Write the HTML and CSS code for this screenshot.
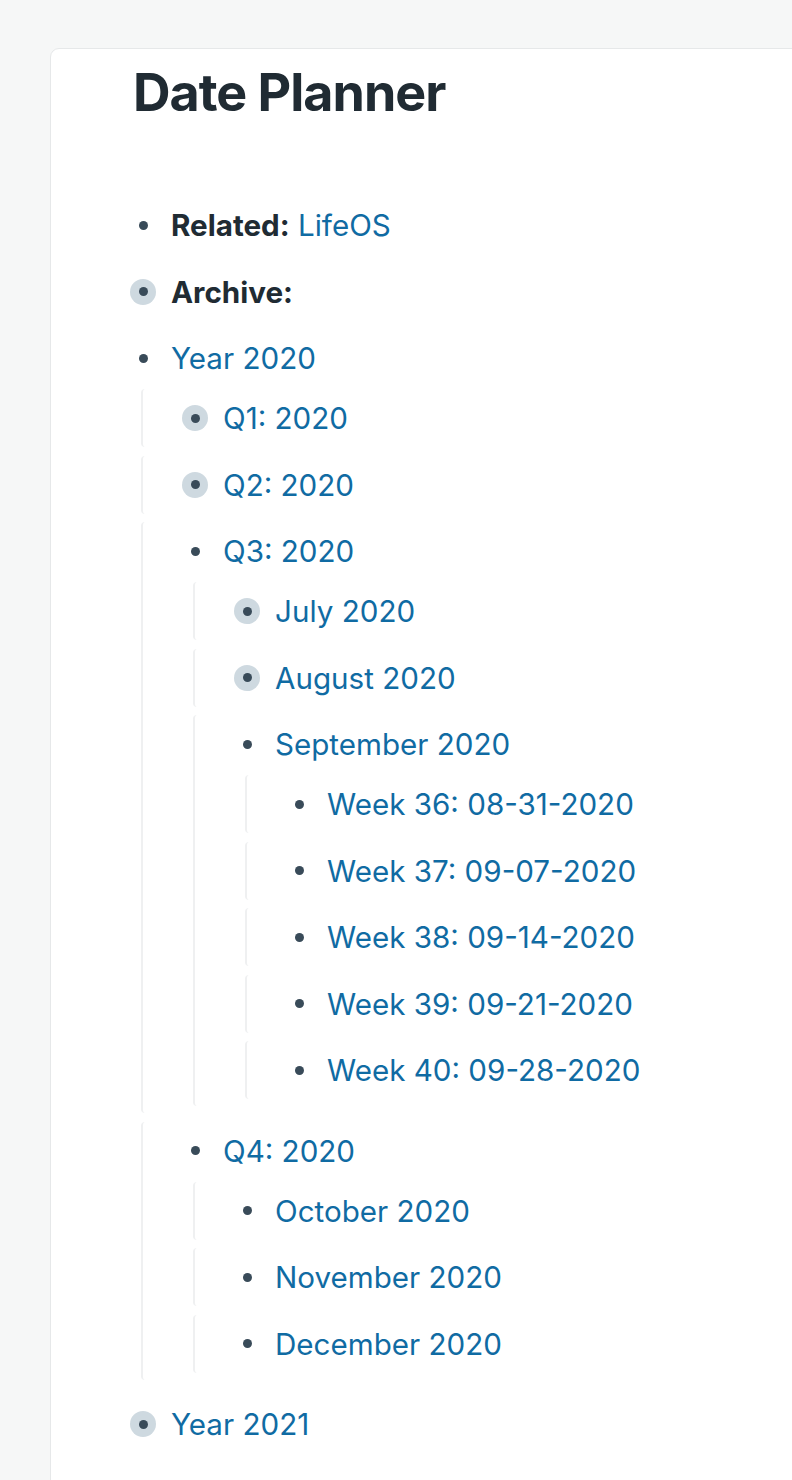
FILE: index.html
```html
<!DOCTYPE html>
<html>
<head>
<meta charset="utf-8">
<link rel="stylesheet" href="styles.css">
</head>
<body>
<div class="page">
  <div class="card">
    <h1 class="title">Date Planner</h1>
    <div class="tree">
      <div class="block">
        <div class="row"><span class="bullet"><span class="dot"></span></span><span class="text"><b class="label">Related:</b> <a class="ref">LifeOS</a></span></div>
      </div>
      <div class="block">
        <div class="row"><span class="bullet collapsed"><span class="dot"></span></span><span class="text"><b class="label">Archive:</b></span></div>
      </div>
      <div class="block parent">
        <div class="row"><span class="bullet"><span class="dot"></span></span><span class="text"><a class="ref">Year 2020</a></span></div>
        <div class="children">
          <div class="block">
            <div class="row"><span class="bullet collapsed"><span class="dot"></span></span><span class="text"><a class="ref">Q1: 2020</a></span></div>
          </div>
          <div class="block">
            <div class="row"><span class="bullet collapsed"><span class="dot"></span></span><span class="text"><a class="ref">Q2: 2020</a></span></div>
          </div>
          <div class="block parent">
            <div class="row"><span class="bullet"><span class="dot"></span></span><span class="text"><a class="ref">Q3: 2020</a></span></div>
            <div class="children">
              <div class="block">
                <div class="row"><span class="bullet collapsed"><span class="dot"></span></span><span class="text"><a class="ref">July 2020</a></span></div>
              </div>
              <div class="block">
                <div class="row"><span class="bullet collapsed"><span class="dot"></span></span><span class="text"><a class="ref">August 2020</a></span></div>
              </div>
              <div class="block parent">
                <div class="row"><span class="bullet"><span class="dot"></span></span><span class="text"><a class="ref">September 2020</a></span></div>
                <div class="children">
                  <div class="block">
                    <div class="row"><span class="bullet"><span class="dot"></span></span><span class="text"><a class="ref">Week 36: 08-31-2020</a></span></div>
                  </div>
                  <div class="block">
                    <div class="row"><span class="bullet"><span class="dot"></span></span><span class="text"><a class="ref">Week 37: 09-07-2020</a></span></div>
                  </div>
                  <div class="block">
                    <div class="row"><span class="bullet"><span class="dot"></span></span><span class="text"><a class="ref">Week 38: 09-14-2020</a></span></div>
                  </div>
                  <div class="block">
                    <div class="row"><span class="bullet"><span class="dot"></span></span><span class="text"><a class="ref">Week 39: 09-21-2020</a></span></div>
                  </div>
                  <div class="block">
                    <div class="row"><span class="bullet"><span class="dot"></span></span><span class="text"><a class="ref">Week 40: 09-28-2020</a></span></div>
                  </div>
                </div>
              </div>
            </div>
          </div>
          <div class="block parent">
            <div class="row"><span class="bullet"><span class="dot"></span></span><span class="text"><a class="ref">Q4: 2020</a></span></div>
            <div class="children">
              <div class="block">
                <div class="row"><span class="bullet"><span class="dot"></span></span><span class="text"><a class="ref">October 2020</a></span></div>
              </div>
              <div class="block">
                <div class="row"><span class="bullet"><span class="dot"></span></span><span class="text"><a class="ref">November 2020</a></span></div>
              </div>
              <div class="block">
                <div class="row"><span class="bullet"><span class="dot"></span></span><span class="text"><a class="ref">December 2020</a></span></div>
              </div>
            </div>
          </div>
        </div>
      </div>
      <div class="block">
        <div class="row"><span class="bullet collapsed"><span class="dot"></span></span><span class="text"><a class="ref">Year 2021</a></span></div>
      </div>
    </div>
  </div>
</div>
</body>
</html>
```

FILE: styles.css
```css
html, body {
  margin: 0;
  padding: 0;
  background: #f6f7f7;
  overflow: hidden;
}

.page {
  width: 792px;
  height: 1480px;
  overflow: hidden;
  padding: 48px 0 0 50px;
  box-sizing: border-box;
  font-family: Inter, "Noto Sans", sans-serif;
  color: #202b33;
}

.card {
  width: 760px;
  min-height: 1450px;
  background: #ffffff;
  border: 1px solid #e6e8e9;
  border-radius: 9px;
  padding: 12px 0 0 79px;
  box-sizing: border-box;
}

.title {
  margin: 0 0 71px 3px;
  font-size: 52px;
  line-height: 64px;
  font-weight: 700;
  letter-spacing: -1px;
  color: #202b33;
}

.tree,
.children {
  display: flex;
  flex-direction: column;
  gap: 8.5px;
}

.children {
  margin: 2px 0 0 11px;
}

.children > .block {
  border-left: 2px solid #eff0f1;
  border-radius: 4px;
  padding-left: 39px;
}

.block.parent {
  padding-bottom: 7px;
}

.row {
  display: flex;
  align-items: center;
  height: 58px;
}

.bullet {
  width: 26px;
  height: 26px;
  border-radius: 50%;
  display: flex;
  align-items: center;
  justify-content: center;
  flex: none;
  margin-right: 15px;
}

.bullet.collapsed {
  background: #ced9e0;
}

.dot {
  width: 9px;
  height: 9px;
  border-radius: 50%;
  background: #394b59;
}

.text {
  font-size: 29.6px;
  line-height: 36px;
  white-space: nowrap;
}

.label {
  font-weight: 700;
  color: #202b33;
}

.ref {
  color: #106ba3;
  text-decoration: none;
}
```
